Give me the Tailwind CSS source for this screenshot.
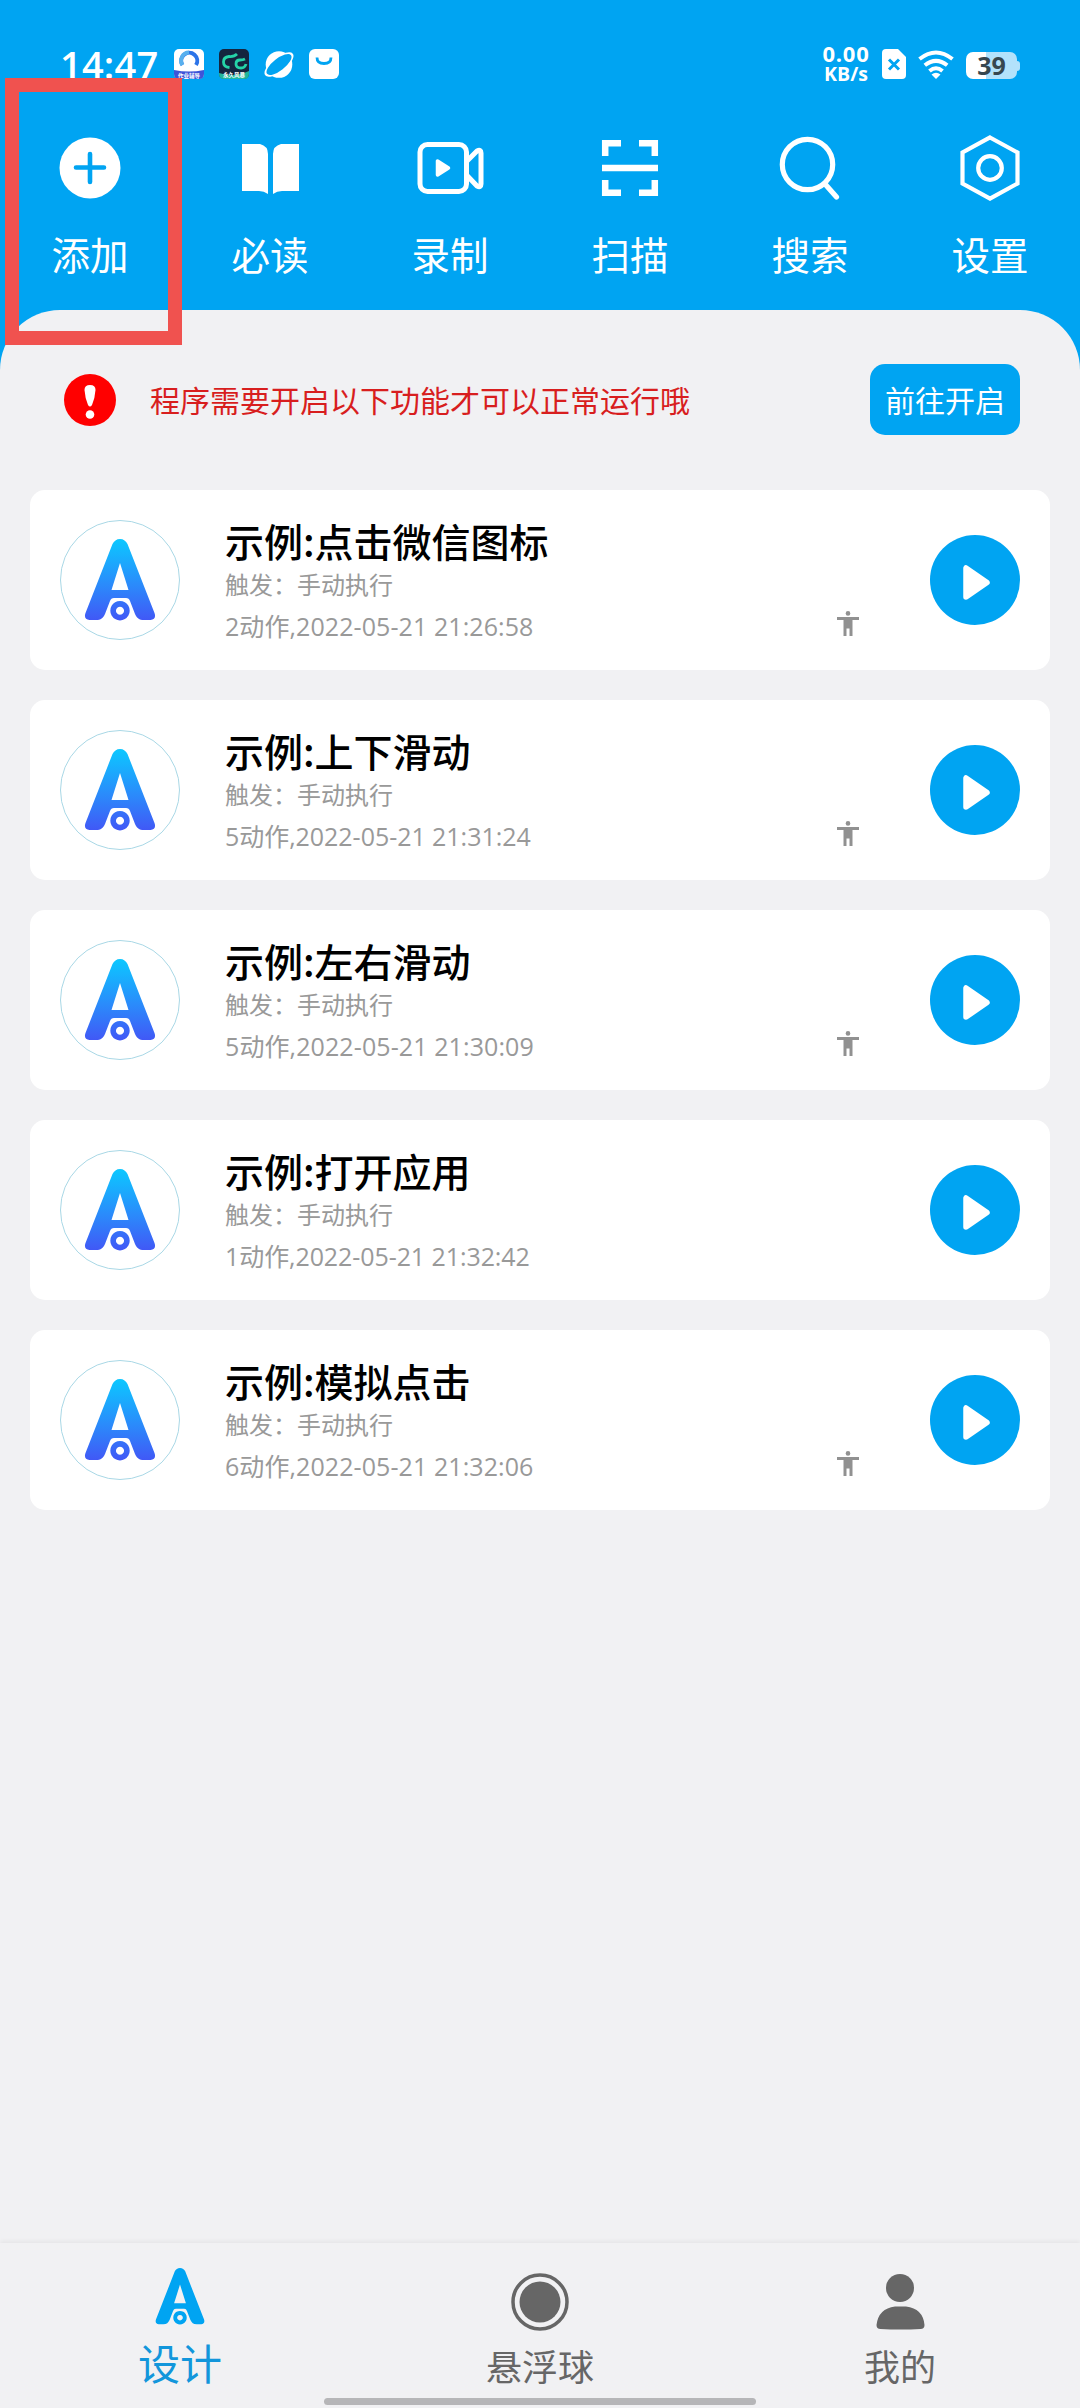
<!DOCTYPE html>
<html lang="zh-CN">
<head>
<meta charset="utf-8">
<title>设计</title>
<script src="https://cdn.jsdelivr.net/npm/@tailwindcss/browser@4"></script>
</head>
<body class="bg-[#00a4f2] font-['Noto_Sans_CJK_SC',sans-serif]">
<svg class="absolute size-0">
  <defs>
    <linearGradient id="grad" x1="0" y1="0" x2="0" y2="1"><stop offset="0" stop-color="#0cc8ff"/><stop offset=".55" stop-color="#2a8cfb"/><stop offset="1" stop-color="#4158f6"/></linearGradient>
  </defs>
  <symbol id="logo" viewBox="0 0 72 83">
    <path fill-rule="evenodd" d="M36 1c3.500 0 6 2 7.500 5L70.500 75c1.500 4 0 7-4 7H60c-5 0-7-2-9-6L46 63q-1-3-4-3H30q-3 0-4 3L21 76c-2 4-4 6-9 6H5.500c-4 0-5.500-3-4-7L28.500 6C30 3 32.500 1 36 1zM36 25L27.500 52h17zM36 63a9.700 9.700 0 1 0 .01 0zM36 68.700a4 4 0 1 1-.01 0z"/>
  </symbol>
  <symbol id="play" viewBox="0 0 90 90">
    <circle cx="45" cy="45" r="45" fill="#00a4f2"/>
    <path d="M36 33v29l21-14.500z" fill="#fff" stroke="#fff" stroke-width="5.500" stroke-linejoin="round"/>
  </symbol>
  <symbol id="man" viewBox="0 0 22 25">
    <circle cx="11" cy="2.400" r="2.300"/><path d="M0 6h22v3h-6.500v16h-3v-7.500h-3V25h-3V9H0z"/>
  </symbol>
</svg>
<div class="relative flex h-[2408px] w-[1080px] flex-col overflow-hidden">
  <header class="flex h-[310px] flex-col text-white">
    <div class="flex h-[118px] items-start pl-[60px] pr-[60px]">
      <div class="mt-[38px] w-[114px] whitespace-nowrap font-['Open_Sans',sans-serif] text-[38px] font-semibold leading-[52px] tracking-[0.2px]">14:47</div>
      <div class="mt-[49px] flex gap-[15px]">
        <svg width="30" height="30" viewBox="0 0 30 30"><rect width="30" height="30" rx="5" fill="#fff"/><path d="M0 21q15 3 30 0v4q0 5-5 5H5q-5 0-5-5z" fill="#3d55d8"/><path d="M8.500 16A8 8 0 1 1 22 16" fill="none" stroke="#2c74e8" stroke-width="4"/><path d="M8.500 16A8 8 0 0 1 15 3.500" fill="none" stroke="#58b0ee" stroke-width="4"/><text x="15" y="28.500" text-anchor="middle" font-size="5.500" font-weight="700" fill="#fff">作业辅导</text></svg>
        <svg width="30" height="30" viewBox="0 0 30 30"><rect width="30" height="30" rx="5" fill="#14253f"/><path d="M0 24q15 5 30-2v3q0 5-5 5H5q-5 0-5-5z" fill="#22b59b"/><path d="M18 5q-3 3-8 2.500Q4.500 8 4.500 13t6 5.500M26 10q-2 1-5 1-4 0-4 4t5 4q4 0 5-4" fill="none" stroke="#25d3a8" stroke-width="2.800"/><text x="15" y="28" text-anchor="middle" font-size="5.500" font-weight="700" fill="#fff">永久风暴</text></svg>
        <svg width="30" height="30" viewBox="0 0 30 30"><circle cx="15" cy="15.500" r="13.300" fill="#fff"/><ellipse cx="15" cy="15.500" rx="17.500" ry="7.200" transform="rotate(-38 15 15.500)" fill="#fff"/><ellipse cx="15" cy="15.500" rx="15.200" ry="5.900" transform="rotate(-38 15 15.500)" fill="#00a4f2"/></svg>
        <svg width="30" height="30" viewBox="0 0 30 30"><rect width="30" height="30" rx="6" fill="#fff"/><path d="M8 8.500q0 6 7 6t7-6" fill="none" stroke="#00a4f2" stroke-width="2.800"/></svg>
      </div>
      <div class="ml-auto mt-[43px] flex w-[54px] flex-col items-center gap-px whitespace-nowrap font-['Open_Sans',sans-serif] font-bold">
        <div class="text-[22px] leading-[20px] tracking-[0.8px]">0.00</div>
        <div class="text-[19.500px] leading-[20px]">KB/s</div>
      </div>
      <svg class="ml-[9px] mt-[49px]" width="24" height="30" viewBox="0 0 24 30"><path d="M4 0h12l8 8v18q0 4-4 4H4q-4 0-4-4V4q0-4 4-4z" fill="#fff"/><path d="M7 10.500l10 10M17 10.500l-10 10" stroke="#00a4f2" stroke-width="3"/></svg>
      <svg class="ml-[12px] mt-[50px]" width="36" height="29" viewBox="0 0 36 29" fill="none" stroke="#fff" stroke-width="4"><path d="M1.500 9Q18-4 34.500 9M6.800 15.300Q18 6.500 29.200 15.300M11.500 21Q18 15.500 24.500 21"/><path d="M13.500 24.500Q18 21 22.500 24.500L18 29z" fill="#fff" stroke="none"/></svg>
      <div class="ml-[12px] mt-[52px] flex items-center">
        <div class="flex h-[27px] w-[51px] items-center justify-center rounded-[7px] bg-linear-to-r from-white from-40% to-[#b3e2fb] to-40% font-['Open_Sans',sans-serif] text-[25px] font-bold leading-none text-[#37474f]">39</div>
        <div class="h-[10px] w-[3px] rounded-r-full bg-[#b3e2fb]"></div>
      </div>
    </div>
    <nav class="grid grid-cols-6 text-[38.500px] leading-[56px]">
      <div class="flex flex-col items-center gap-[7px]"><svg width="100" height="100" viewBox="0 0 100 100"><circle cx="50" cy="50" r="30.500" fill="#fff"/><path d="M50 36v28M36 49.500h28" stroke="#00a4f2" stroke-width="4.600" stroke-linecap="round"/></svg><span>添加</span></div>
      <div class="flex flex-col items-center gap-[7px]"><svg width="100" height="100" viewBox="0 0 100 100" fill="#fff"><path d="M22 26h18q8 2 8 10v40q-4-3-9-3H22zM79 26H61q-8 2-8 10v40q4-3 9-3h17z"/></svg><span>必读</span></div>
      <div class="flex flex-col items-center gap-[7px]"><svg width="100" height="100" viewBox="0 0 100 100" fill="none" stroke="#fff" stroke-width="5"><rect x="20" y="26.500" width="46.500" height="47" rx="7.500"/><path d="M67 43L77 33q4-2 4 2v31q0 4-4 2L67 57.500" stroke-linejoin="round"/><path d="M37.500 43v14l11-7z" fill="#fff" stroke-width="3.500" stroke-linejoin="round"/></svg><span>录制</span></div>
      <div class="flex flex-col items-center gap-[7px]"><svg width="100" height="100" viewBox="0 0 100 100" fill="none" stroke="#fff" stroke-width="6.500"><path d="M25.200 38V25.200H41M59 25.200h15.800V38M25.200 62v12.800H41M59 74.800h15.800V62M22 50h56"/></svg><span>扫描</span></div>
      <div class="flex flex-col items-center gap-[7px]"><svg width="100" height="100" viewBox="0 0 100 100" fill="none" stroke="#fff" stroke-width="5.200"><circle cx="47.500" cy="46.500" r="25.200"/><path d="M65 66l11.500 13" stroke-linecap="round"/></svg><span>搜索</span></div>
      <div class="flex flex-col items-center gap-[7px]"><svg width="100" height="100" viewBox="0 0 100 100" fill="none" stroke="#fff" stroke-width="4.200"><path d="M50 19.500L77.500 34.500v31L50 80.500 22.500 65.500v-31z"/><circle cx="50" cy="50" r="11.800"/></svg><span>设置</span></div>
    </nav>
  </header>

  <main class="flex-1 rounded-t-[60px] bg-[#f1f1f3] px-[30px]">
    <div class="flex h-[180px] items-center px-[30px]">
      <svg class="ml-[4px]" width="52" height="52" viewBox="0 0 52 52"><circle cx="26" cy="26" r="26" fill="#f00"/><path d="M26 11q5.500 0 5.500 5Q31 24 28 31q-2 3-4 0-3-7-3.500-15 0-5 5.500-5z" fill="#fff"/><circle cx="26" cy="40.500" r="4.300" fill="#fff"/></svg>
      <p class="mb-[2px] ml-[34px] text-[30px] leading-[44px] text-[#d81e1e]">程序需要开启以下功能才可以正常运行哦</p>
      <button class="mb-px ml-auto h-[71px] w-[150px] rounded-[15px] bg-[#00a4f2] pb-[2px] text-[30px] leading-[44px] text-white">前往开启</button>
    </div>
    <div class="flex flex-col gap-[30px]">
      <article class="flex h-[180px] rounded-[15px] bg-white p-[30px]">
        <div class="flex size-[120px] items-center justify-center rounded-full border border-[#a9d8e6]"><svg class="mb-[1px]" width="72" height="83" fill="url(#grad)"><use href="#logo"/></svg></div>
        <div class="ml-[45px] w-[540px] whitespace-nowrap text-[#999]"><h2 class="-mt-[8px] text-[39px] font-medium leading-[56px] text-black">示例:点击微信图标</h2><p class="-mt-[2px] text-[24px] leading-[36px]">触发：手动执行</p><p class="mt-[6px] font-['Open_Sans','Noto_Sans_CJK_SC',sans-serif] text-[25px] leading-[36px] tracking-[0.08px]">2动作,2022-05-21 21:26:58</p></div>
        <svg class="ml-[72px] mt-[91px]" width="22" height="25" fill="#919191"><use href="#man"/></svg>
        <svg class="ml-auto mt-[15px]" width="90" height="90"><use href="#play"/></svg>
      </article>
      <article class="flex h-[180px] rounded-[15px] bg-white p-[30px]">
        <div class="flex size-[120px] items-center justify-center rounded-full border border-[#a9d8e6]"><svg class="mb-[1px]" width="72" height="83" fill="url(#grad)"><use href="#logo"/></svg></div>
        <div class="ml-[45px] w-[540px] whitespace-nowrap text-[#999]"><h2 class="-mt-[8px] text-[39px] font-medium leading-[56px] text-black">示例:上下滑动</h2><p class="-mt-[2px] text-[24px] leading-[36px]">触发：手动执行</p><p class="mt-[6px] font-['Open_Sans','Noto_Sans_CJK_SC',sans-serif] text-[25px] leading-[36px] tracking-[-0.04px]">5动作,2022-05-21 21:31:24</p></div>
        <svg class="ml-[72px] mt-[91px]" width="22" height="25" fill="#919191"><use href="#man"/></svg>
        <svg class="ml-auto mt-[15px]" width="90" height="90"><use href="#play"/></svg>
      </article>
      <article class="flex h-[180px] rounded-[15px] bg-white p-[30px]">
        <div class="flex size-[120px] items-center justify-center rounded-full border border-[#a9d8e6]"><svg class="mb-[1px]" width="72" height="83" fill="url(#grad)"><use href="#logo"/></svg></div>
        <div class="ml-[45px] w-[540px] whitespace-nowrap text-[#999]"><h2 class="-mt-[8px] text-[39px] font-medium leading-[56px] text-black">示例:左右滑动</h2><p class="-mt-[2px] text-[24px] leading-[36px]">触发：手动执行</p><p class="mt-[6px] font-['Open_Sans','Noto_Sans_CJK_SC',sans-serif] text-[25px] leading-[36px] tracking-[0.1px]">5动作,2022-05-21 21:30:09</p></div>
        <svg class="ml-[72px] mt-[91px]" width="22" height="25" fill="#919191"><use href="#man"/></svg>
        <svg class="ml-auto mt-[15px]" width="90" height="90"><use href="#play"/></svg>
      </article>
      <article class="flex h-[180px] rounded-[15px] bg-white p-[30px]">
        <div class="flex size-[120px] items-center justify-center rounded-full border border-[#a9d8e6]"><svg class="mb-[1px]" width="72" height="83" fill="url(#grad)"><use href="#logo"/></svg></div>
        <div class="ml-[45px] w-[540px] whitespace-nowrap text-[#999]"><h2 class="-mt-[8px] text-[39px] font-medium leading-[56px] text-black">示例:打开应用</h2><p class="-mt-[2px] text-[24px] leading-[36px]">触发：手动执行</p><p class="mt-[6px] font-['Open_Sans','Noto_Sans_CJK_SC',sans-serif] text-[25px] leading-[36px] tracking-[-0.08px]">1动作,2022-05-21 21:32:42</p></div>
        <svg class="ml-auto mt-[15px]" width="90" height="90"><use href="#play"/></svg>
      </article>
      <article class="flex h-[180px] rounded-[15px] bg-white p-[30px]">
        <div class="flex size-[120px] items-center justify-center rounded-full border border-[#a9d8e6]"><svg class="mb-[1px]" width="72" height="83" fill="url(#grad)"><use href="#logo"/></svg></div>
        <div class="ml-[45px] w-[540px] whitespace-nowrap text-[#999]"><h2 class="-mt-[8px] text-[39px] font-medium leading-[56px] text-black">示例:模拟点击</h2><p class="-mt-[2px] text-[24px] leading-[36px]">触发：手动执行</p><p class="mt-[6px] font-['Open_Sans','Noto_Sans_CJK_SC',sans-serif] text-[25px] leading-[36px] tracking-[0.08px]">6动作,2022-05-21 21:32:06</p></div>
        <svg class="ml-[72px] mt-[91px]" width="22" height="25" fill="#919191"><use href="#man"/></svg>
        <svg class="ml-auto mt-[15px]" width="90" height="90"><use href="#play"/></svg>
      </article>
    </div>
  </main>

  <footer class="grid h-[165px] grid-cols-3 bg-[#f1f1f3] text-[36px] leading-[54px] text-[#666] shadow-[0_-2px_4px_rgba(0,0,0,0.05)]">
    <div class="flex flex-col items-center text-[42px] text-[#1296db]"><svg class="mt-[24px] mb-[10px]" width="50" height="58" fill="#00a4f2"><use href="#logo"/></svg><span>设计</span></div>
    <div class="flex flex-col items-center"><svg class="mt-[29px] mb-[6px]" width="60" height="60" viewBox="0 0 60 60" fill="#666"><circle cx="30" cy="30" r="27" fill="none" stroke="#666" stroke-width="3.500"/><circle cx="30" cy="30" r="20.500"/></svg><span>悬浮球</span></div>
    <div class="flex flex-col items-center"><svg class="mt-[29px] mb-[6px]" width="60" height="60" viewBox="0 0 60 60" fill="#666"><circle cx="30" cy="16" r="14"/><path d="M25 34.500h11q17 2 18.500 18.500 0 4-4 4-20 1-40 0-4 0-4-4Q8.500 36.500 25 34.500z"/></svg><span>我的</span></div>
  </footer>
  <div class="absolute bottom-[3px] left-[324px] h-[7px] w-[432px] rounded-full bg-[#b6b6b8]"></div>
  <div class="absolute left-[5px] top-[78px] h-[267px] w-[177px] border-[14.500px] border-[#f0524f]"></div>
</div>
</body>
</html>
